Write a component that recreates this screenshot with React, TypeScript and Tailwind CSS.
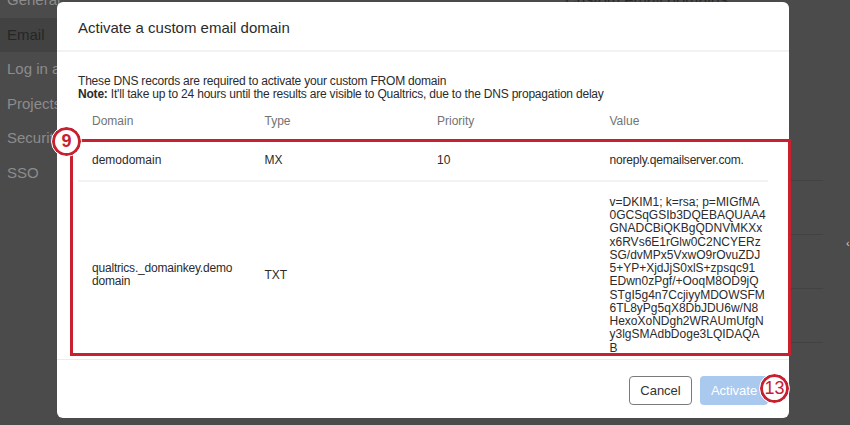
import React from 'react';

const NAV = ['General', 'Email', 'Log in and...', 'Projects', 'Security', 'SSO'];

const DKIM_LINES = [
  'v=DKIM1; k=rsa; p=MIGfMA',
  '0GCSqGSIb3DQEBAQUAA4',
  'GNADCBiQKBgQDNVMKXx',
  'x6RVs6E1rGlw0C2NCYERz',
  'SG/dvMPx5VxwO9rOvuZDJ',
  '5+YP+XjdJjS0xlS+zpsqc91',
  'EDwn0zPgf/+OoqM8OD9jQ',
  'STgI5g4n7CcjiyyMDOWSFM',
  '6TL8yPg5qX8DbJDU6w/N8',
  'HexoXoNDgh2WRAUmUfgN',
  'y3lgSMAdbDoge3LQIDAQA',
  'B',
];

function Marker({ label, className }: { label: string; className: string }) {
  return (
    <div
      className={`absolute flex items-center justify-center w-[29px] h-[29px] rounded-full bg-white border-[3px] border-[#c8202f] outline outline-1 outline-white text-[#c8202f] ${className}`}
    >
      {label}
    </div>
  );
}

export default function App() {
  return (
    <div className="relative w-[850px] h-[425px] overflow-hidden bg-[#4b4b4b] font-['Liberation_Sans',Arial,sans-serif]">
      {/* settings page behind the dialog */}
      <div className="flex flex-col w-[120px] -mt-[17px] text-[15px] text-[#8c8c8c]">
        {NAV.map((item) => (
          <div
            key={item}
            className={`h-[34.6px] flex items-center pl-[7px] whitespace-nowrap ${item === 'Email' ? 'bg-[#424242] text-[#262626]' : ''}`}
          >
            {item}
          </div>
        ))}
      </div>
      <div className="absolute left-[565px] -top-[12px] text-[16px] text-[#2a2a2a] whitespace-nowrap">Custom email domains</div>
      <div className="absolute left-[790px] top-[180px] flex flex-col gap-[53px]">
        {[0, 1, 2, 3].map((i) => (
          <div key={i} className="w-[33px] h-px bg-[#424242]" />
        ))}
      </div>
      <div className="absolute left-[846px] top-[235px] text-[11px] text-[#cfcfcf]">‹</div>

      {/* dialog */}
      <div className="absolute left-[57px] top-[2px] w-[732px] h-[416px] bg-white rounded-[6px] flex flex-col">
        <div className="h-[53px] flex items-center px-[21px] pt-[4px] border-b-2 border-[#f2f2f2] text-[15px] text-[#2b2b2b]">
          Activate a custom email domain
        </div>
        <div className="flex-1 px-[21px] pt-[23px] text-[12px] text-[#2b2b2b]">
          <p className="leading-[13px] tracking-[-0.2px]">These DNS records are required to activate your custom FROM domain</p>
          <p className="leading-[13px] tracking-[-0.2px]">
            <span className="font-bold">Note:</span> It'll take up to 24 hours until the results are visible to Qualtrics, due to the DNS propagation delay
          </p>
          <div className="mt-[1px] w-[690px]">
            <div className="grid grid-cols-4 h-[39px] items-center text-[#737373]">
              <div className="px-[14px]">Domain</div>
              <div className="px-[14px]">Type</div>
              <div className="px-[14px]">Priority</div>
              <div className="px-[14px]">Value</div>
            </div>
            <div className="grid grid-cols-4 h-[41px] items-center border-b-2 border-[#f2f2f2]">
              <div className="px-[14px]">demodomain</div>
              <div className="px-[14px]">MX</div>
              <div className="px-[14px]">10</div>
              <div className="px-[14px] whitespace-nowrap tracking-[-0.2px]">noreply.qemailserver.com.</div>
            </div>
            <div className="grid grid-cols-4 items-center pt-[14px] pb-[4px]">
              <div className="px-[14px] leading-[13px] tracking-[-0.2px]">
                <div>qualtrics._domainkey.demo</div>
                <div>domain</div>
              </div>
              <div className="px-[14px]">TXT</div>
              <div className="px-[14px]" />
              <div className="px-[14px] leading-[13.25px] whitespace-nowrap">
                {DKIM_LINES.map((line) => (
                  <div key={line}>{line}</div>
                ))}
              </div>
            </div>
          </div>
        </div>
        <div className="h-[62px] border-t border-[#ececec] flex items-start justify-end gap-[8px] px-[21px] pt-[16px] text-[13px]">
          <button className="w-[63px] h-[29px] rounded-[4px] border border-[#7a7a7a] text-[#333] bg-white">Cancel</button>
          <button className="w-[68px] h-[29px] rounded-[4px] bg-[#a9c9ef] text-white">Activate</button>
        </div>
      </div>

      {/* callouts */}
      <div className="absolute left-[70px] top-[139px] w-[721px] h-[217px] border-[3px] border-[#c8202f]" />
      <Marker label="9" className="left-[52px] top-[127px] text-[18px] font-bold" />
      <Marker label="13" className="left-[760px] top-[374px] text-[18px]" />
    </div>
  );
}
